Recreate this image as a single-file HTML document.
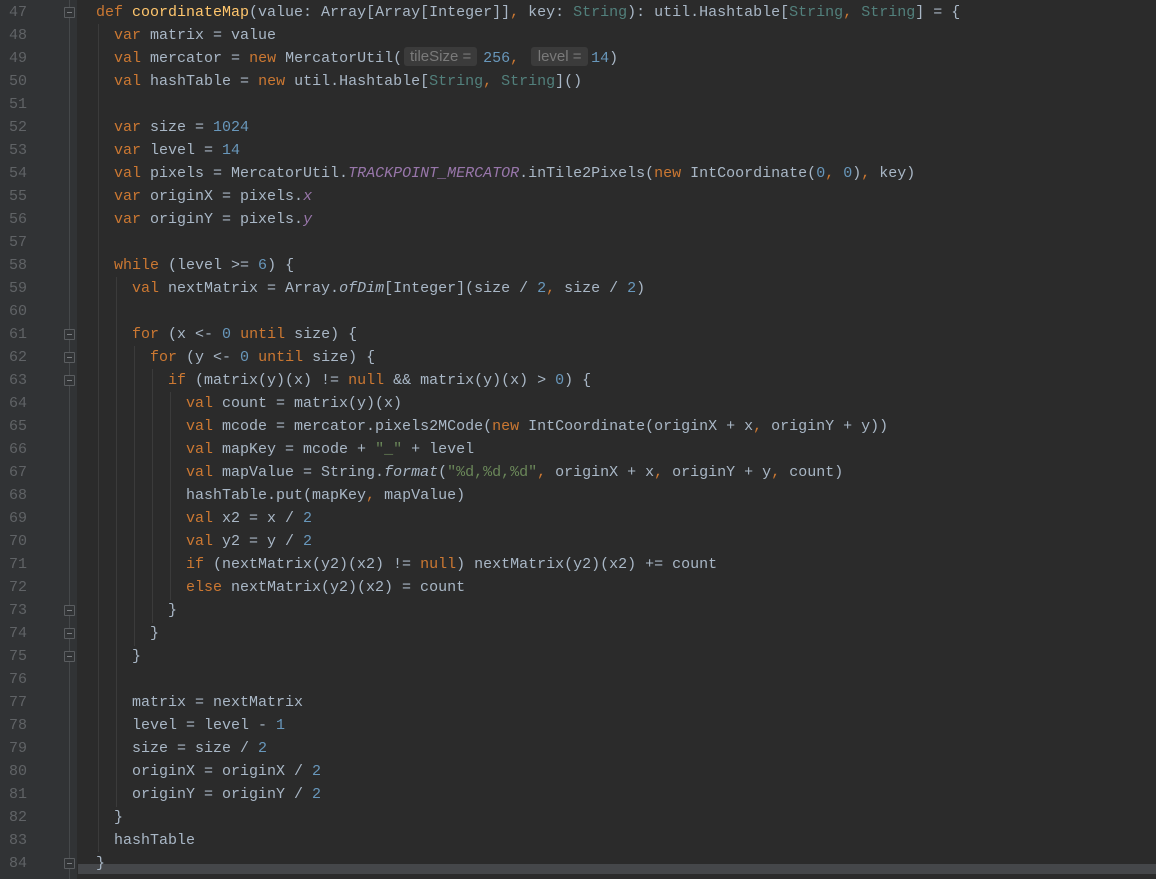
<!DOCTYPE html>
<html><head><meta charset="utf-8"><style>
body{margin:0;width:1156px;height:879px;background:#2b2b2b;overflow:hidden;position:relative;font-family:"Liberation Mono",monospace;font-size:15px}
#g{position:absolute;left:0;top:0;width:77px;height:879px;background:#313335}
#gl{position:absolute;left:69px;top:0;width:1px;height:879px;background:#45484a}
.ln{position:absolute;left:0;width:27px;text-align:right;color:#606366;font-size:15px;height:23px;line-height:23px}
.c{position:absolute;left:96px;height:23px;line-height:23px;white-space:pre;color:#a9b7c6}
.k{color:#cc7832}.n{color:#6897bb}.t{color:#52807c}.s{color:#6a8759}.f{color:#ffc66d}.i{color:#9876aa;font-style:italic}.it{font-style:italic}
.h{display:inline-block;background:#3b3b3b;color:#7a7a7a;font-family:"Liberation Sans",sans-serif;font-size:15px;line-height:19px;border-radius:3px;text-align:center;vertical-align:1px}
.fm{position:absolute;left:64px;width:9px;height:9px;border:1px solid #5a5d60;background:#313335;border-radius:1px}
.fm:after{content:"";position:absolute;left:2px;top:4px;width:5px;height:1px;background:#7a7d80}
.gd{position:absolute;width:1px;background:#3b3b3b}
#sb{position:absolute;left:78px;top:864px;width:1078px;height:10px;background:#45474a}
</style></head><body>
<div id="g"></div><div id="gl"></div>
<div class="gd" style="left:98px;top:24px;height:828px"></div>
<div class="gd" style="left:116px;top:277px;height:530px"></div>
<div class="gd" style="left:134px;top:346px;height:300px"></div>
<div class="gd" style="left:152px;top:369px;height:254px"></div>
<div class="gd" style="left:170px;top:392px;height:208px"></div>
<div id="sb"></div>

<div class="ln" style="top:1px">47</div><div class="ln" style="top:24px">48</div><div class="ln" style="top:47px">49</div><div class="ln" style="top:70px">50</div><div class="ln" style="top:93px">51</div><div class="ln" style="top:116px">52</div><div class="ln" style="top:139px">53</div><div class="ln" style="top:162px">54</div><div class="ln" style="top:185px">55</div><div class="ln" style="top:208px">56</div><div class="ln" style="top:231px">57</div><div class="ln" style="top:254px">58</div><div class="ln" style="top:277px">59</div><div class="ln" style="top:300px">60</div><div class="ln" style="top:323px">61</div><div class="ln" style="top:346px">62</div><div class="ln" style="top:369px">63</div><div class="ln" style="top:392px">64</div><div class="ln" style="top:415px">65</div><div class="ln" style="top:438px">66</div><div class="ln" style="top:461px">67</div><div class="ln" style="top:484px">68</div><div class="ln" style="top:507px">69</div><div class="ln" style="top:530px">70</div><div class="ln" style="top:553px">71</div><div class="ln" style="top:576px">72</div><div class="ln" style="top:599px">73</div><div class="ln" style="top:622px">74</div><div class="ln" style="top:645px">75</div><div class="ln" style="top:668px">76</div><div class="ln" style="top:691px">77</div><div class="ln" style="top:714px">78</div><div class="ln" style="top:737px">79</div><div class="ln" style="top:760px">80</div><div class="ln" style="top:783px">81</div><div class="ln" style="top:806px">82</div><div class="ln" style="top:829px">83</div><div class="ln" style="top:852px">84</div>

<div class="fm" style="top:7px"></div>
<div class="fm" style="top:329px"></div>
<div class="fm" style="top:352px"></div>
<div class="fm" style="top:375px"></div>
<div class="fm" style="top:605px"></div>
<div class="fm" style="top:628px"></div>
<div class="fm" style="top:651px"></div>
<div class="fm" style="top:858px"></div>

<div class="c" style="top:1px"><span class="k">def </span><span class="f">coordinateMap</span>(value: Array[Array[Integer]]<span class="k">, </span>key: <span class="t">String</span>): util.Hashtable[<span class="t">String</span><span class="k">, </span><span class="t">String</span>] = {</div>
<div class="c" style="top:24px">  <span class="k">var </span>matrix = value</div>
<div class="c" style="top:47px">  <span class="k">val </span>mercator = <span class="k">new </span>MercatorUtil(<span class="h" style="width:73px;margin-left:2px;margin-right:6px">tileSize =</span><span class="n">256</span><span class="k">, </span><span class="h" style="width:57px;margin-left:3px;margin-right:3px">level =</span><span class="n">14</span>)</div>
<div class="c" style="top:70px">  <span class="k">val </span>hashTable = <span class="k">new </span>util.Hashtable[<span class="t">String</span><span class="k">, </span><span class="t">String</span>]()</div>
<div class="c" style="top:116px">  <span class="k">var </span>size = <span class="n">1024</span></div>
<div class="c" style="top:139px">  <span class="k">var </span>level = <span class="n">14</span></div>
<div class="c" style="top:162px">  <span class="k">val </span>pixels = MercatorUtil.<span class="i">TRACKPOINT_MERCATOR</span>.inTile2Pixels(<span class="k">new </span>IntCoordinate(<span class="n">0</span><span class="k">, </span><span class="n">0</span>)<span class="k">, </span>key)</div>
<div class="c" style="top:185px">  <span class="k">var </span>originX = pixels.<span class="i">x</span></div>
<div class="c" style="top:208px">  <span class="k">var </span>originY = pixels.<span class="i">y</span></div>
<div class="c" style="top:254px">  <span class="k">while </span>(level >= <span class="n">6</span>) {</div>
<div class="c" style="top:277px">    <span class="k">val </span>nextMatrix = Array.<span class="it">ofDim</span>[Integer](size / <span class="n">2</span><span class="k">, </span>size / <span class="n">2</span>)</div>
<div class="c" style="top:323px">    <span class="k">for </span>(x <- <span class="n">0 </span><span class="k">until </span>size) {</div>
<div class="c" style="top:346px">      <span class="k">for </span>(y <- <span class="n">0 </span><span class="k">until </span>size) {</div>
<div class="c" style="top:369px">        <span class="k">if </span>(matrix(y)(x) != <span class="k">null </span>&& matrix(y)(x) > <span class="n">0</span>) {</div>
<div class="c" style="top:392px">          <span class="k">val </span>count = matrix(y)(x)</div>
<div class="c" style="top:415px">          <span class="k">val </span>mcode = mercator.pixels2MCode(<span class="k">new </span>IntCoordinate(originX + x<span class="k">, </span>originY + y))</div>
<div class="c" style="top:438px">          <span class="k">val </span>mapKey = mcode + <span class="s">"_"</span> + level</div>
<div class="c" style="top:461px">          <span class="k">val </span>mapValue = String.<span class="it">format</span>(<span class="s">"%d,%d,%d"</span><span class="k">, </span>originX + x<span class="k">, </span>originY + y<span class="k">, </span>count)</div>
<div class="c" style="top:484px">          hashTable.put(mapKey<span class="k">, </span>mapValue)</div>
<div class="c" style="top:507px">          <span class="k">val </span>x2 = x / <span class="n">2</span></div>
<div class="c" style="top:530px">          <span class="k">val </span>y2 = y / <span class="n">2</span></div>
<div class="c" style="top:553px">          <span class="k">if </span>(nextMatrix(y2)(x2) != <span class="k">null</span>) nextMatrix(y2)(x2) += count</div>
<div class="c" style="top:576px">          <span class="k">else </span>nextMatrix(y2)(x2) = count</div>
<div class="c" style="top:599px">        }</div>
<div class="c" style="top:622px">      }</div>
<div class="c" style="top:645px">    }</div>
<div class="c" style="top:691px">    matrix = nextMatrix</div>
<div class="c" style="top:714px">    level = level - <span class="n">1</span></div>
<div class="c" style="top:737px">    size = size / <span class="n">2</span></div>
<div class="c" style="top:760px">    originX = originX / <span class="n">2</span></div>
<div class="c" style="top:783px">    originY = originY / <span class="n">2</span></div>
<div class="c" style="top:806px">  }</div>
<div class="c" style="top:829px">  hashTable</div>
<div class="c" style="top:852px">}</div>
</body></html>
